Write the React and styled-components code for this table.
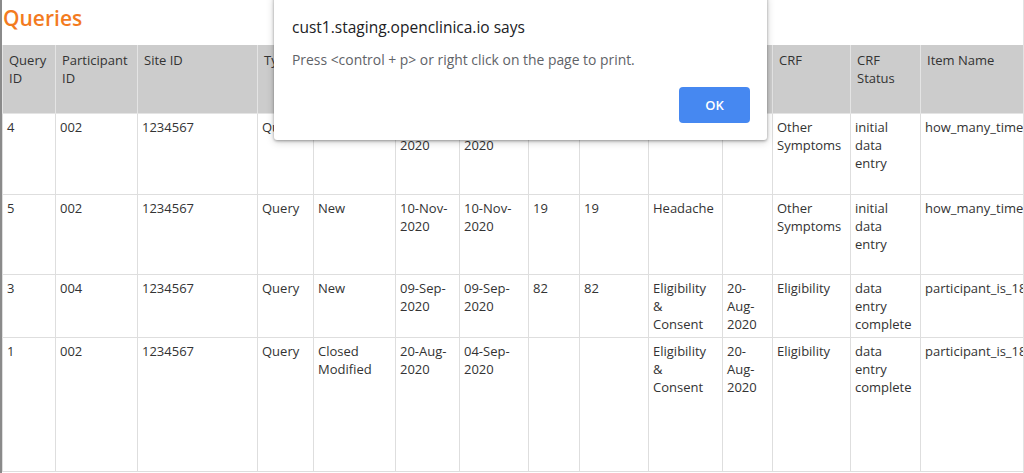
import React from 'react';
import styled, { createGlobalStyle } from 'styled-components';

const GlobalStyle = createGlobalStyle`
    html, body {
        margin: 0;
        padding: 0;
        background: #fff;
        overflow: hidden;
    }
`;

const Page = styled.div`
    position: relative;
    width: 1021px;
    height: 473px;
    border-left: 2px solid #8a8a8a;
    border-right: 1px solid #e2e2e2;
    overflow: hidden;
    font-family: "Open Sans", "DejaVu Sans", sans-serif;
    color: #333;
`;

const Title = styled.h1`
    margin: 0;
    padding: 3px 0 0 1px;
    height: 42px;
    font-size: 21px;
    line-height: 30px;
    font-weight: 600;
    color: #f37b1f;
`;

const Table = styled.table`
    border-collapse: collapse;
    table-layout: fixed;
    width: 1118px;
    font-size: 13px;
    line-height: 18px;
`;

const Col = styled.col`
    width: ${p => p.$w}px;
`;

const Row = styled.tr`
    height: ${p => p.$h}px;
`;

const Th = styled.th`
    background: #cccccc;
    border: 1px solid #e4e4e4;
    border-top: none;
    padding: 6px 4px 6px 6px;
    text-align: left;
    vertical-align: top;
    font-weight: 400;
    color: #333;
`;

const Td = styled.td`
    border: 1px solid #dedede;
    padding: 4px 9px 4px 4px;
    vertical-align: top;
`;

const Dialog = styled.div`
    position: absolute;
    left: 272px;
    top: -4px;
    width: 493px;
    box-sizing: border-box;
    padding: 21px 17px 17px 18px;
    background: #fff;
    border-radius: 0 0 3px 3px;
    box-shadow: 0 1px 3px rgba(0, 0, 0, 0.35), 0 2px 8px rgba(0, 0, 0, 0.18);
`;

const DialogTitle = styled.div`
    font-size: 15.5px;
    line-height: 20px;
    color: #202124;
`;

const DialogText = styled.div`
    margin-top: 14px;
    font-size: 13.9px;
    line-height: 18px;
    color: #5f6368;
`;

const ButtonRow = styled.div`
    display: flex;
    justify-content: flex-end;
    margin-top: 18px;
`;

const OkButton = styled.button`
    width: 71px;
    height: 36px;
    border: none;
    border-radius: 4px;
    background: #4688f1;
    color: #fff;
    font-family: "Open Sans", "DejaVu Sans", sans-serif;
    font-size: 13px;
    font-weight: 600;
`;

const widths = [53, 82, 120, 56, 82, 64, 69, 51, 69, 74, 50, 78, 70, 200];

const headers = [
    'Query ID', 'Participant ID', 'Site ID', 'Type', 'Status',
    'Date Created', 'Date Updated', 'Days Open', 'Days Since Update',
    'Event', 'Event Date', 'CRF', 'CRF Status', 'Item Name',
];

const rows = [
    { h: 81, cells: ['4', '002', '1234567', 'Query', 'New', '10-Nov-2020', '10-Nov-2020', '19', '19', 'Headache', '', 'Other Symptoms', 'initial data entry', 'how_many_times_headache'] },
    { h: 80, cells: ['5', '002', '1234567', 'Query', 'New', '10-Nov-2020', '10-Nov-2020', '19', '19', 'Headache', '', 'Other Symptoms', 'initial data entry', 'how_many_times_headache'] },
    { h: 63, cells: ['3', '004', '1234567', 'Query', 'New', '09-Sep-2020', '09-Sep-2020', '82', '82', 'Eligibility & Consent', '20-Aug-2020', 'Eligibility', 'data entry complete', 'participant_is_18'] },
    { h: 134, cells: ['1', '002', '1234567', 'Query', 'Closed Modified', '20-Aug-2020', '04-Sep-2020', '', '', 'Eligibility & Consent', '20-Aug-2020', 'Eligibility', 'data entry complete', 'participant_is_18'] },
];

export default function App() {
    return (
        <Page>
            <GlobalStyle />
            <Title>Queries</Title>
            <Table>
                <colgroup>
                    {widths.map((w, i) => <Col key={i} $w={w} />)}
                </colgroup>
                <thead>
                    <Row $h={68}>
                        {headers.map(h => <Th key={h}>{h}</Th>)}
                    </Row>
                </thead>
                <tbody>
                    {rows.map((r, i) =>
                        <Row key={i} $h={r.h}>
                            {r.cells.map((c, j) => <Td key={j}>{c}</Td>)}
                        </Row>
                    )}
                </tbody>
            </Table>
            <Dialog>
                <DialogTitle>cust1.staging.openclinica.io says</DialogTitle>
                <DialogText>Press &lt;control + p&gt; or right click on the page to print.</DialogText>
                <ButtonRow>
                    <OkButton>OK</OkButton>
                </ButtonRow>
            </Dialog>
        </Page>
    );
}
